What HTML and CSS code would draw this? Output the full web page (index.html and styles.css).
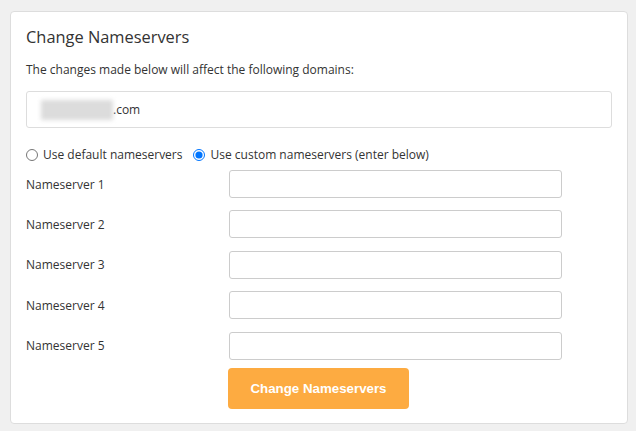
FILE: index.html
```html
<!DOCTYPE html>
<html lang="en">
<head>
<meta charset="utf-8">
<title>Change Nameservers</title>
<link rel="stylesheet" href="styles.css">
</head>
<body>
<div class="card">
  <h2 class="title">Change Nameservers</h2>
  <p class="intro">The changes made below will affect the following domains:</p>
  <div class="domains"><span class="blur"></span>.com</div>
  <div class="radios">
    <label class="radio"><input type="radio" name="ns"> Use default nameservers</label>
    <label class="radio"><input type="radio" name="ns" checked> Use custom nameservers (enter below)</label>
  </div>
  <div class="rows">
    <div class="row"><span class="label">Nameserver 1</span><input class="field" type="text"></div>
    <div class="row"><span class="label">Nameserver 2</span><input class="field" type="text"></div>
    <div class="row"><span class="label">Nameserver 3</span><input class="field" type="text"></div>
    <div class="row"><span class="label">Nameserver 4</span><input class="field" type="text"></div>
    <div class="row"><span class="label">Nameserver 5</span><input class="field" type="text"></div>
  </div>
  <div class="actions">
    <button class="btn" type="button">Change Nameservers</button>
  </div>
</div>
</body>
</html>
```

FILE: styles.css
```css
html, body {
  margin: 0;
  padding: 0;
}
body {
  background: #f0f0f0;
  font-family: "Open Sans", "Noto Sans", sans-serif;
  color: #333;
  font-size: 12px;
  padding: 11px 8px 0 10px;
}
.card {
  box-sizing: border-box;
  width: 618px;
  height: 413px;
  background: #fff;
  border: 1px solid #ddd;
  border-radius: 4px;
  padding: 14px 15px 14px 15px;
  display: flex;
  flex-direction: column;
}
.title {
  margin: 0;
  font-size: 16.4px;
  font-weight: 400;
  line-height: 22px;
  color: #333;
}
.intro {
  margin: 13px 0 0 0;
  line-height: 18px;
}
.domains {
  box-sizing: border-box;
  margin-top: 12px;
  height: 37px;
  border: 1px solid #ddd;
  border-radius: 3px;
  padding: 0 14px;
  display: flex;
  align-items: center;
  font-size: 12px;
}
.blur {
  display: inline-block;
  width: 72px;
  height: 20px;
  background: #dcdcdc;
  filter: blur(2px);
}
.radios {
  margin-top: 19px;
  height: 16px;
  display: flex;
  align-items: center;
  gap: 11px;
}
.radio {
  display: flex;
  align-items: center;
  gap: 5px;
  line-height: 16px;
}
.radio input {
  margin: 0;
  width: 12px;
  height: 12px;
}
.rows {
  margin-top: 7px;
  display: flex;
  flex-direction: column;
  gap: 12.4px;
}
.row {
  display: flex;
  align-items: center;
}
.label {
  width: 203px;
  flex: none;
}
.field {
  box-sizing: border-box;
  width: 333px;
  height: 28px;
  margin: 0;
  border: 1px solid #ccc;
  border-radius: 3px;
  background: #fff;
}
.actions {
  margin-top: 8px;
  padding-left: 202px;
}
.btn {
  box-sizing: border-box;
  width: 181px;
  height: 41px;
  border: none;
  border-radius: 4px;
  background: #fdab41;
  color: #fff;
  font-family: "Liberation Sans", Arial, sans-serif;
  font-weight: 700;
  font-size: 13.3px;
  padding: 0;
}
```
